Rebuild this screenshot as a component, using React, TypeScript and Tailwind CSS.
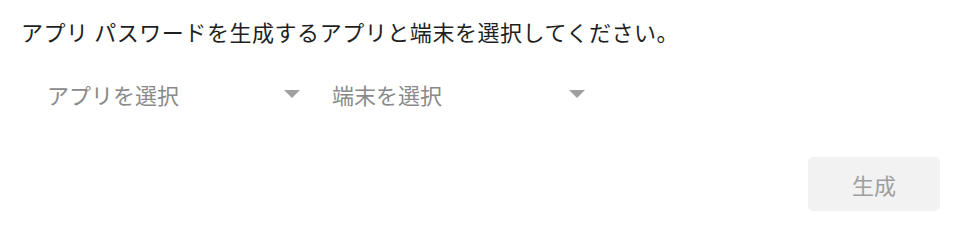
import { useState } from 'react';

const font = { fontFamily: '"Noto Sans CJK JP", "Noto Sans", sans-serif' };

function Dropdown({ label }: { label: string }) {
  const [value] = useState('');
  return (
    <button
      type="button"
      className="flex items-center justify-between w-[281px] h-[40px] pl-[26px] pr-0 text-left"
    >
      <span className="text-[22px] text-[#8a8a8a] leading-none">{value || label}</span>
      <span className="w-0 h-0 border-l-[8px] border-r-[8px] border-t-[8px] border-l-transparent border-r-transparent border-t-[#a0a0a0] mr-[2px]" />
    </button>
  );
}

export default function App() {
  return (
    <div className="w-[959px] h-[234px] bg-white px-[21px] pt-[14px]" style={font}>
      <p className="text-[22px] leading-[34px] text-[#1f1f1f] tracking-[0.55px]">
        アプリ パスワードを生成するアプリと端末を選択してください。
      </p>
      <div className="flex items-center gap-[4px] mt-[26px]">
        <Dropdown label="アプリを選択" />
        <Dropdown label="端末を選択" />
      </div>
      <div className="flex justify-end mt-[43px]">
        <button
          type="button"
          disabled
          className="w-[132px] h-[54px] rounded-[5px] bg-[#f2f2f2] text-[22px] text-[#9e9e9e] mr-[-2px]"
        >
          生成
        </button>
      </div>
    </div>
  );
}
